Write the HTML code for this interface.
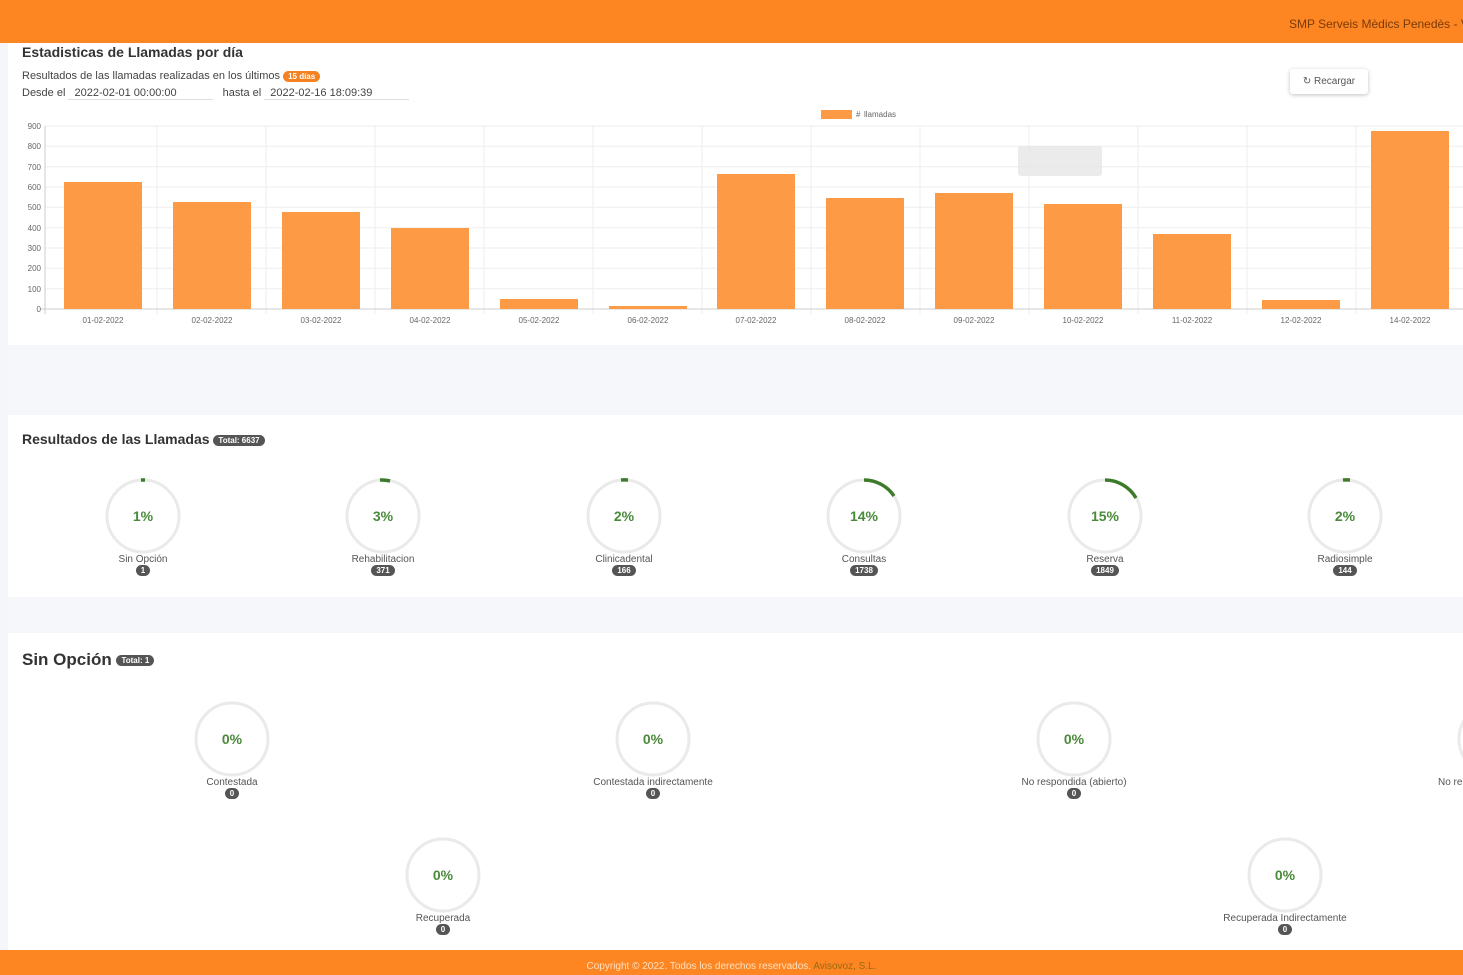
<!DOCTYPE html>
<html><head><meta charset="utf-8"><style>
*{margin:0;padding:0;box-sizing:border-box}
body{width:1463px;height:975px;overflow:hidden;background:#fff;font-family:"Liberation Sans",sans-serif;color:#444;position:relative}
.hdr{position:absolute;left:0;top:0;width:1463px;height:43px;background:#fd8623}
.hdr span{position:absolute;left:1289px;top:17px;font-size:12px;color:#7a3a08;white-space:nowrap}
.strip{position:absolute;left:0;top:43px;width:8px;height:907px;background:#f4f6fa}
.gap{position:absolute;left:8px;width:1455px;background:#f5f7fb}
.t{position:absolute;white-space:nowrap}
.badge{display:inline-block;background:#555;color:#fff;border-radius:8px;font-size:8px;font-weight:bold;padding:1px 5px;vertical-align:middle}
.ob{background:#f58220}
.g{position:absolute;width:120px;text-align:center;font-size:10px;color:#555}
.foot{position:absolute;left:0;top:950px;width:1463px;height:25px;background:#fd8623;color:#fde0c0;font-size:10px;text-align:center;padding-top:11px}
</style></head><body>
<div class="hdr"><span>SMP Serveis Mèdics Penedès - V</span></div>
<div class="strip"></div>
<div class="gap" style="top:345px;height:70px"></div>
<div class="gap" style="top:597px;height:36px"></div>

<div class="t" style="left:22px;top:44px;font-size:14px;font-weight:bold;color:#333">Estadisticas de Llamadas por día</div>
<div class="t" style="left:22px;top:70px;font-size:11px">Resultados de las llamadas realizadas en los últimos <span class="badge ob">15 días</span></div>
<div class="t" style="left:22px;top:87px;font-size:11px">Desde el <span style="display:inline-block;width:145px;border-bottom:1px solid #ddd;padding-left:6px">2022-02-01 00:00:00</span> &nbsp; hasta el <span style="display:inline-block;width:145px;border-bottom:1px solid #ddd;padding-left:6px">2022-02-16 18:09:39</span></div>
<div class="t" style="left:1290px;top:69px;width:78px;height:25px;box-shadow:0 1px 4px rgba(0,0,0,.25);border-radius:3px;font-size:10px;line-height:25px;text-align:center;color:#555">&#x21bb; Recargar</div>

<svg style="position:absolute;left:0;top:100px" width="1463" height="240" font-family="Liberation Sans" font-size="8" fill="#666">
<rect x="821" y="10" width="31" height="9" fill="#fd9a45"/><text x="856" y="17">#</text><text x="864" y="17">llamadas</text>
<g stroke="#eee" stroke-width="1">
<line x1="45" y1="26" x2="1463" y2="26"/><line x1="45" y1="46.3" x2="1463" y2="46.3"/><line x1="45" y1="66.7" x2="1463" y2="66.7"/><line x1="45" y1="87" x2="1463" y2="87"/><line x1="45" y1="107.3" x2="1463" y2="107.3"/><line x1="45" y1="127.7" x2="1463" y2="127.7"/><line x1="45" y1="148" x2="1463" y2="148"/><line x1="45" y1="168.3" x2="1463" y2="168.3"/><line x1="45" y1="188.7" x2="1463" y2="188.7"/>
<line x1="157" y1="26" x2="157" y2="214"/><line x1="266" y1="26" x2="266" y2="214"/><line x1="375" y1="26" x2="375" y2="214"/><line x1="484" y1="26" x2="484" y2="214"/><line x1="593" y1="26" x2="593" y2="214"/><line x1="702" y1="26" x2="702" y2="214"/><line x1="811" y1="26" x2="811" y2="214"/><line x1="920" y1="26" x2="920" y2="214"/><line x1="1029" y1="26" x2="1029" y2="214"/><line x1="1138" y1="26" x2="1138" y2="214"/><line x1="1247" y1="26" x2="1247" y2="214"/><line x1="1356" y1="26" x2="1356" y2="214"/>
</g>
<line x1="45" y1="26" x2="45" y2="214" stroke="#ccc"/><line x1="40" y1="209" x2="1463" y2="209" stroke="#ccc"/>
<g text-anchor="end"><text x="41" y="29">900</text><text x="41" y="49">800</text><text x="41" y="70">700</text><text x="41" y="90">600</text><text x="41" y="110">500</text><text x="41" y="131">400</text><text x="41" y="151">300</text><text x="41" y="171">200</text><text x="41" y="192">100</text><text x="41" y="212">0</text></g>
<g fill="#fd9a45">
<rect x="64" y="82" width="78" height="127"/><rect x="173" y="102" width="78" height="107"/><rect x="282" y="112" width="78" height="97"/><rect x="391" y="128" width="78" height="81"/><rect x="500" y="199" width="78" height="10"/><rect x="609" y="206" width="78" height="3"/><rect x="717" y="74" width="78" height="135"/><rect x="826" y="98" width="78" height="111"/><rect x="935" y="93" width="78" height="116"/><rect x="1044" y="104" width="78" height="105"/><rect x="1153" y="134" width="78" height="75"/><rect x="1262" y="200" width="78" height="9"/><rect x="1371" y="31" width="78" height="178"/>
</g>
<rect x="1018" y="46" width="84" height="30" rx="3" fill="#e6e6e6" opacity=".8"/>
<g text-anchor="middle"><text x="103" y="223">01-02-2022</text><text x="212" y="223">02-02-2022</text><text x="321" y="223">03-02-2022</text><text x="430" y="223">04-02-2022</text><text x="539" y="223">05-02-2022</text><text x="648" y="223">06-02-2022</text><text x="756" y="223">07-02-2022</text><text x="865" y="223">08-02-2022</text><text x="974" y="223">09-02-2022</text><text x="1083" y="223">10-02-2022</text><text x="1192" y="223">11-02-2022</text><text x="1301" y="223">12-02-2022</text><text x="1410" y="223">14-02-2022</text></g>
</svg>

<div class="t" style="left:22px;top:431px;font-size:14px;font-weight:bold;color:#333">Resultados de las Llamadas <span class="badge">Total: 6637</span></div>
<div class="t" style="left:22px;top:650px;font-size:17px;font-weight:bold;color:#333">Sin Opción <span class="badge">Total: 1</span></div>

<svg style="position:absolute;left:0;top:0" width="1463" height="975" font-family="Liberation Sans" font-weight="bold" font-size="14" fill="#4a8a3a" text-anchor="middle">
<g fill="none" stroke="#eaeaea" stroke-width="3">
<circle cx="143" cy="516" r="36"/><circle cx="383" cy="516" r="36"/><circle cx="624" cy="516" r="36"/><circle cx="864" cy="516" r="36"/><circle cx="1105" cy="516" r="36"/><circle cx="1345" cy="516" r="36"/>
<circle cx="232" cy="739" r="36"/><circle cx="653" cy="739" r="36"/><circle cx="1074" cy="739" r="36"/><circle cx="1495" cy="739" r="36"/><circle cx="443" cy="875" r="36"/><circle cx="1285" cy="875" r="36"/>
</g>
<g fill="none" stroke="#3d7a2a" stroke-width="3.5">
<path d="M141 480 A36 36 0 0 1 145 480"/><path d="M380 480 A36 36 0 0 1 390 481"/><path d="M621 480 A36 36 0 0 1 628 480"/><path d="M864 480 A36 36 0 0 1 894 496"/><path d="M1105 480 A36 36 0 0 1 1136 498"/><path d="M1343 480 A36 36 0 0 1 1350 480"/>
</g>
<text x="143" y="521">1%</text><text x="383" y="521">3%</text><text x="624" y="521">2%</text><text x="864" y="521">14%</text><text x="1105" y="521">15%</text><text x="1345" y="521">2%</text>
<text x="232" y="744">0%</text><text x="653" y="744">0%</text><text x="1074" y="744">0%</text><text x="443" y="880">0%</text><text x="1285" y="880">0%</text>
</svg>

<div class="g" style="left:83px;top:554px">Sin Opción<br><span class="badge">1</span></div>
<div class="g" style="left:323px;top:554px">Rehabilitacion<br><span class="badge">371</span></div>
<div class="g" style="left:564px;top:554px">Clinicadental<br><span class="badge">166</span></div>
<div class="g" style="left:804px;top:554px">Consultas<br><span class="badge">1738</span></div>
<div class="g" style="left:1045px;top:554px">Reserva<br><span class="badge">1849</span></div>
<div class="g" style="left:1285px;top:554px">Radiosimple<br><span class="badge">144</span></div>

<div class="g" style="left:172px;top:777px">Contestada<br><span class="badge">0</span></div>
<div class="g" style="left:573px;top:777px;width:160px">Contestada indirectamente<br><span class="badge">0</span></div>
<div class="g" style="left:994px;top:777px;width:160px">No respondida (abierto)<br><span class="badge">0</span></div>
<div class="t" style="left:1438px;top:777px;font-size:10px;color:#555">No re</div>
<div class="g" style="left:383px;top:913px">Recuperada<br><span class="badge">0</span></div>
<div class="g" style="left:1205px;top:913px;width:160px">Recuperada Indirectamente<br><span class="badge">0</span></div>

<div class="foot">Copyright © 2022. Todos los derechos reservados. <span style="color:#9a6a10">Avisovoz, S.L.</span></div>
</body></html>
